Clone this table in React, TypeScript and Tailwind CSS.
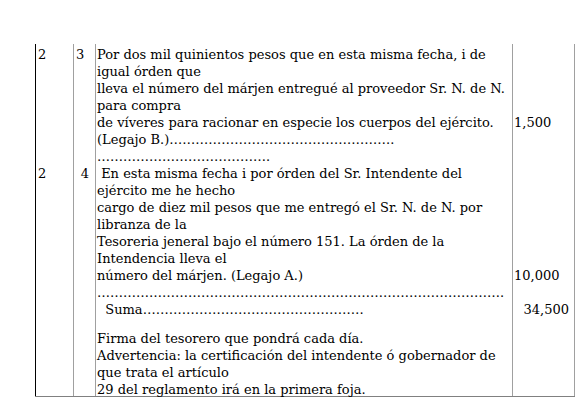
import React from 'react';

const cellL = 'border-l border-[#a0a0a0]';

const Line: React.FC<{ children?: React.ReactNode; className?: string }> = ({ children, className }) => (
  <div className={`h-[17px] whitespace-pre leading-[17px] ${className ?? ''}`}>{children}</div>
);

const dots = (n: number) => '…'.repeat(n);

export default function App() {
  return (
    <div className="min-h-[402px] w-[580px] bg-white text-black font-['DejaVu_Serif',serif] text-[13px]">
      <div className="pl-[35px] pt-[44px]">
        <div className="grid w-[540px] grid-cols-[38px_22px_417px_63px] border-b border-[#808080]">
          {/* row 1 */}
          <div className="border-l border-black pl-[2px] pt-[2px]"><Line>2</Line></div>
          <div className={`${cellL} pl-[2px] pt-[2px]`}><Line>3</Line></div>
          <div className={`${cellL} pl-[1px] pt-[2px]`}>
            <Line>Por dos mil quinientos pesos que en esta misma fecha, i de</Line>
            <Line>igual órden que</Line>
            <Line>lleva el número del márjen entregué al proveedor Sr. N. de N.</Line>
            <Line>para compra</Line>
            <Line>de víveres para racionar en especie los cuerpos del ejército.</Line>
            <Line>(Legajo B.){dots(17)}.</Line>
            <Line>{dots(13)}.</Line>
          </div>
          <div className={`${cellL} border-r pl-[1px] pt-[2px]`}>
            <Line />
            <Line />
            <Line />
            <Line />
            <Line>1,500</Line>
          </div>

          {/* row 2 */}
          <div className="border-l border-black pl-[2px]"><Line>2</Line></div>
          <div className={`${cellL} pr-[6px] text-right`}><Line>4</Line></div>
          <div className={`${cellL} pl-[1px]`}>
            <Line> En esta misma fecha i por órden del Sr. Intendente del</Line>
            <Line>ejército me he hecho</Line>
            <Line>cargo de diez mil pesos que me entregó el Sr. N. de N. por</Line>
            <Line>libranza de la</Line>
            <Line>Tesoreria jeneral bajo el número 151. La órden de la</Line>
            <Line>Intendencia lleva el</Line>
            <Line>número del márjen. (Legajo A.)</Line>
            <Line>{dots(31)}.</Line>
            <Line>  Suma{dots(17)}</Line>
          </div>
          <div className={`${cellL} border-r`}>
            <Line />
            <Line />
            <Line />
            <Line />
            <Line />
            <Line />
            <Line className="pl-[1px]">10,000</Line>
            <Line />
            <Line className="pr-[5px] text-right">34,500</Line>
          </div>

          {/* row 3 */}
          <div className="border-l border-black" />
          <div className={cellL} />
          <div className={`${cellL} pl-[1px] pt-[12px]`}>
            <Line>Firma del tesorero que pondrá cada día.</Line>
            <Line>Advertencia: la certificación del intendente ó gobernador de</Line>
            <Line>que trata el artículo</Line>
            <Line className="!h-[15px]">29 del reglamento irá en la primera foja.</Line>
          </div>
          <div className={`${cellL} border-r`} />
        </div>
      </div>
    </div>
  );
}
